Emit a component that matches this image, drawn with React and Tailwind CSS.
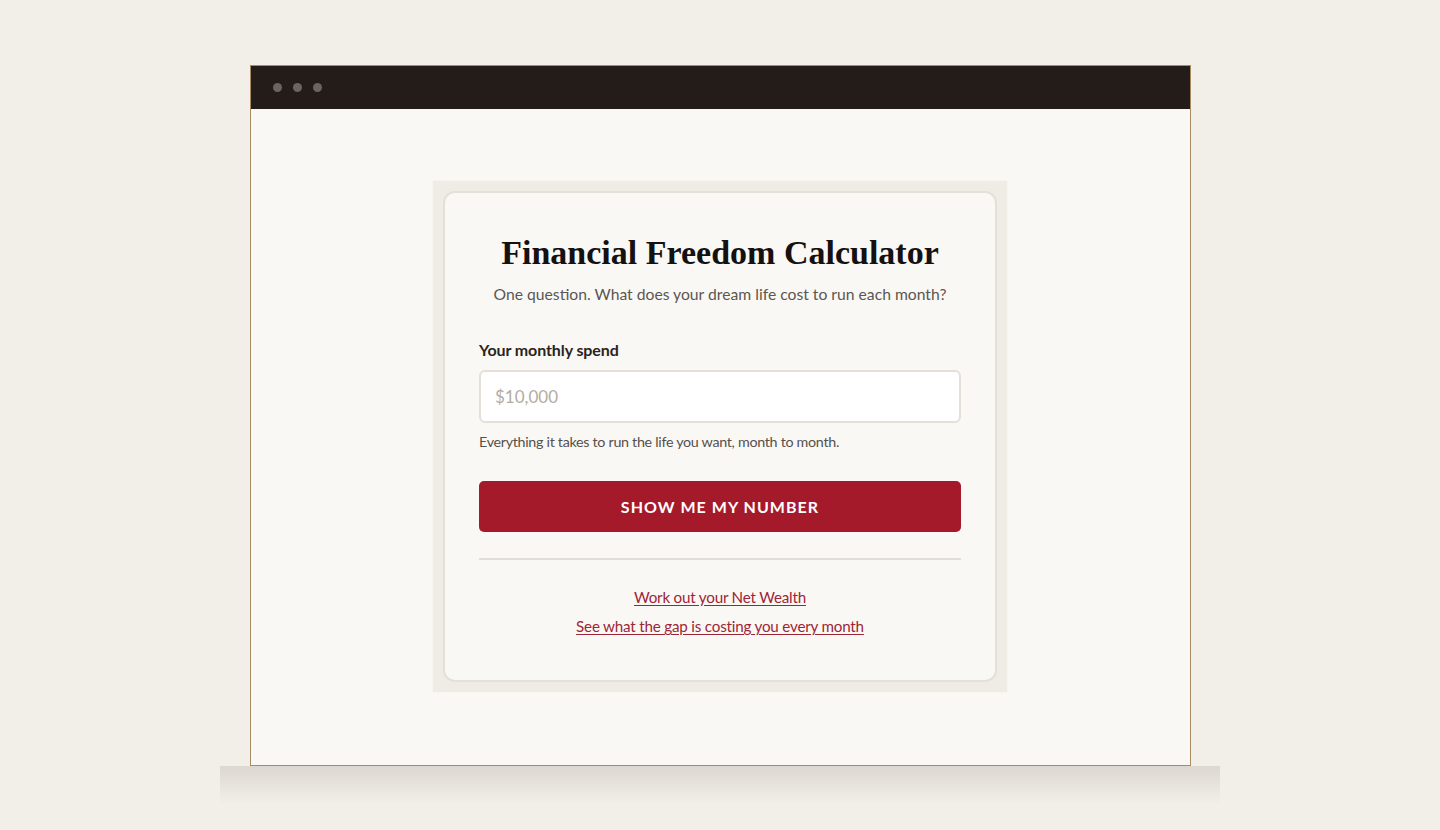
export default function App() {
  return (
    <div className="min-h-[830px] w-full bg-[#f2efe8] pt-[65px] font-['Lato','Noto_Sans',sans-serif]">
      {/* BROWSER FRAME */}
      <div className="mx-auto w-[941px] border border-[#a88a63] bg-[#faf8f5]">
        <div className="flex h-[43px] items-center gap-[11px] bg-[#231c19] pl-[22px]">
          <span className="h-[9px] w-[9px] rounded-full bg-[#6b6460]" />
          <span className="h-[9px] w-[9px] rounded-full bg-[#6b6460]" />
          <span className="h-[9px] w-[9px] rounded-full bg-[#6b6460]" />
        </div>

        <div className="flex h-[656px] justify-center pt-[71px]">
          {/* CARD */}
          <div className="h-[513px] w-[576px] border border-[#f7f5f0] bg-[#efece5] p-[10px]">
            <div className="flex h-full flex-col rounded-[12px] border-2 border-[#e4dfd7] bg-[#faf8f5] px-[34px] pt-[38px]">
              <h1 className="text-center font-['Liberation_Serif','DejaVu_Serif',serif] text-[34px] font-bold leading-[44px] text-[#141110]">
                Financial Freedom Calculator
              </h1>
              <p className="mt-[9px] text-center text-[15.7px] leading-[20px] text-[#5c5651]">
                One question. What does your dream life cost to run each month?
              </p>

              <label className="mt-[36px] text-[16px] font-bold leading-[20px] tracking-[-0.1px] text-[#2a2420]">
                Your monthly spend
              </label>
              <input
                type="text"
                placeholder="$10,000"
                className="mt-[10px] h-[53px] w-full rounded-[6px] border-2 border-[#e4dfd7] bg-white px-[14px] text-[17px] text-[#2a2420] outline-none placeholder:text-[#b3aca3]"
              />
              <p className="mt-[9px] text-[14.3px] leading-[20px] tracking-[-0.3px] text-[#55504b]">
                Everything it takes to run the life you want, month to month.
              </p>

              <button className="mt-[29px] h-[51px] w-full rounded-[5px] bg-[#a51a2b] text-[16px] font-bold tracking-[0.065em] text-white">
                SHOW ME MY NUMBER
              </button>

              <div className="mt-[26px] h-[2px] w-full bg-[#e2ddd6]" />

              <div className="mt-[27px] flex flex-col items-center gap-[9px] text-[15.2px] leading-[20px] tracking-[-0.2px] text-[#9e2535]">
                <a href="#" className="underline underline-offset-2">Work out your Net Wealth</a>
                <a href="#" className="underline underline-offset-2">See what the gap is costing you every month</a>
              </div>
            </div>
          </div>
        </div>
      </div>

      {/* SHADOW STRIP */}
      <div className="mx-auto h-[38px] w-[1000px] bg-gradient-to-b from-[#dcd8d1] to-[#f2efe8]" />
    </div>
  );
}
